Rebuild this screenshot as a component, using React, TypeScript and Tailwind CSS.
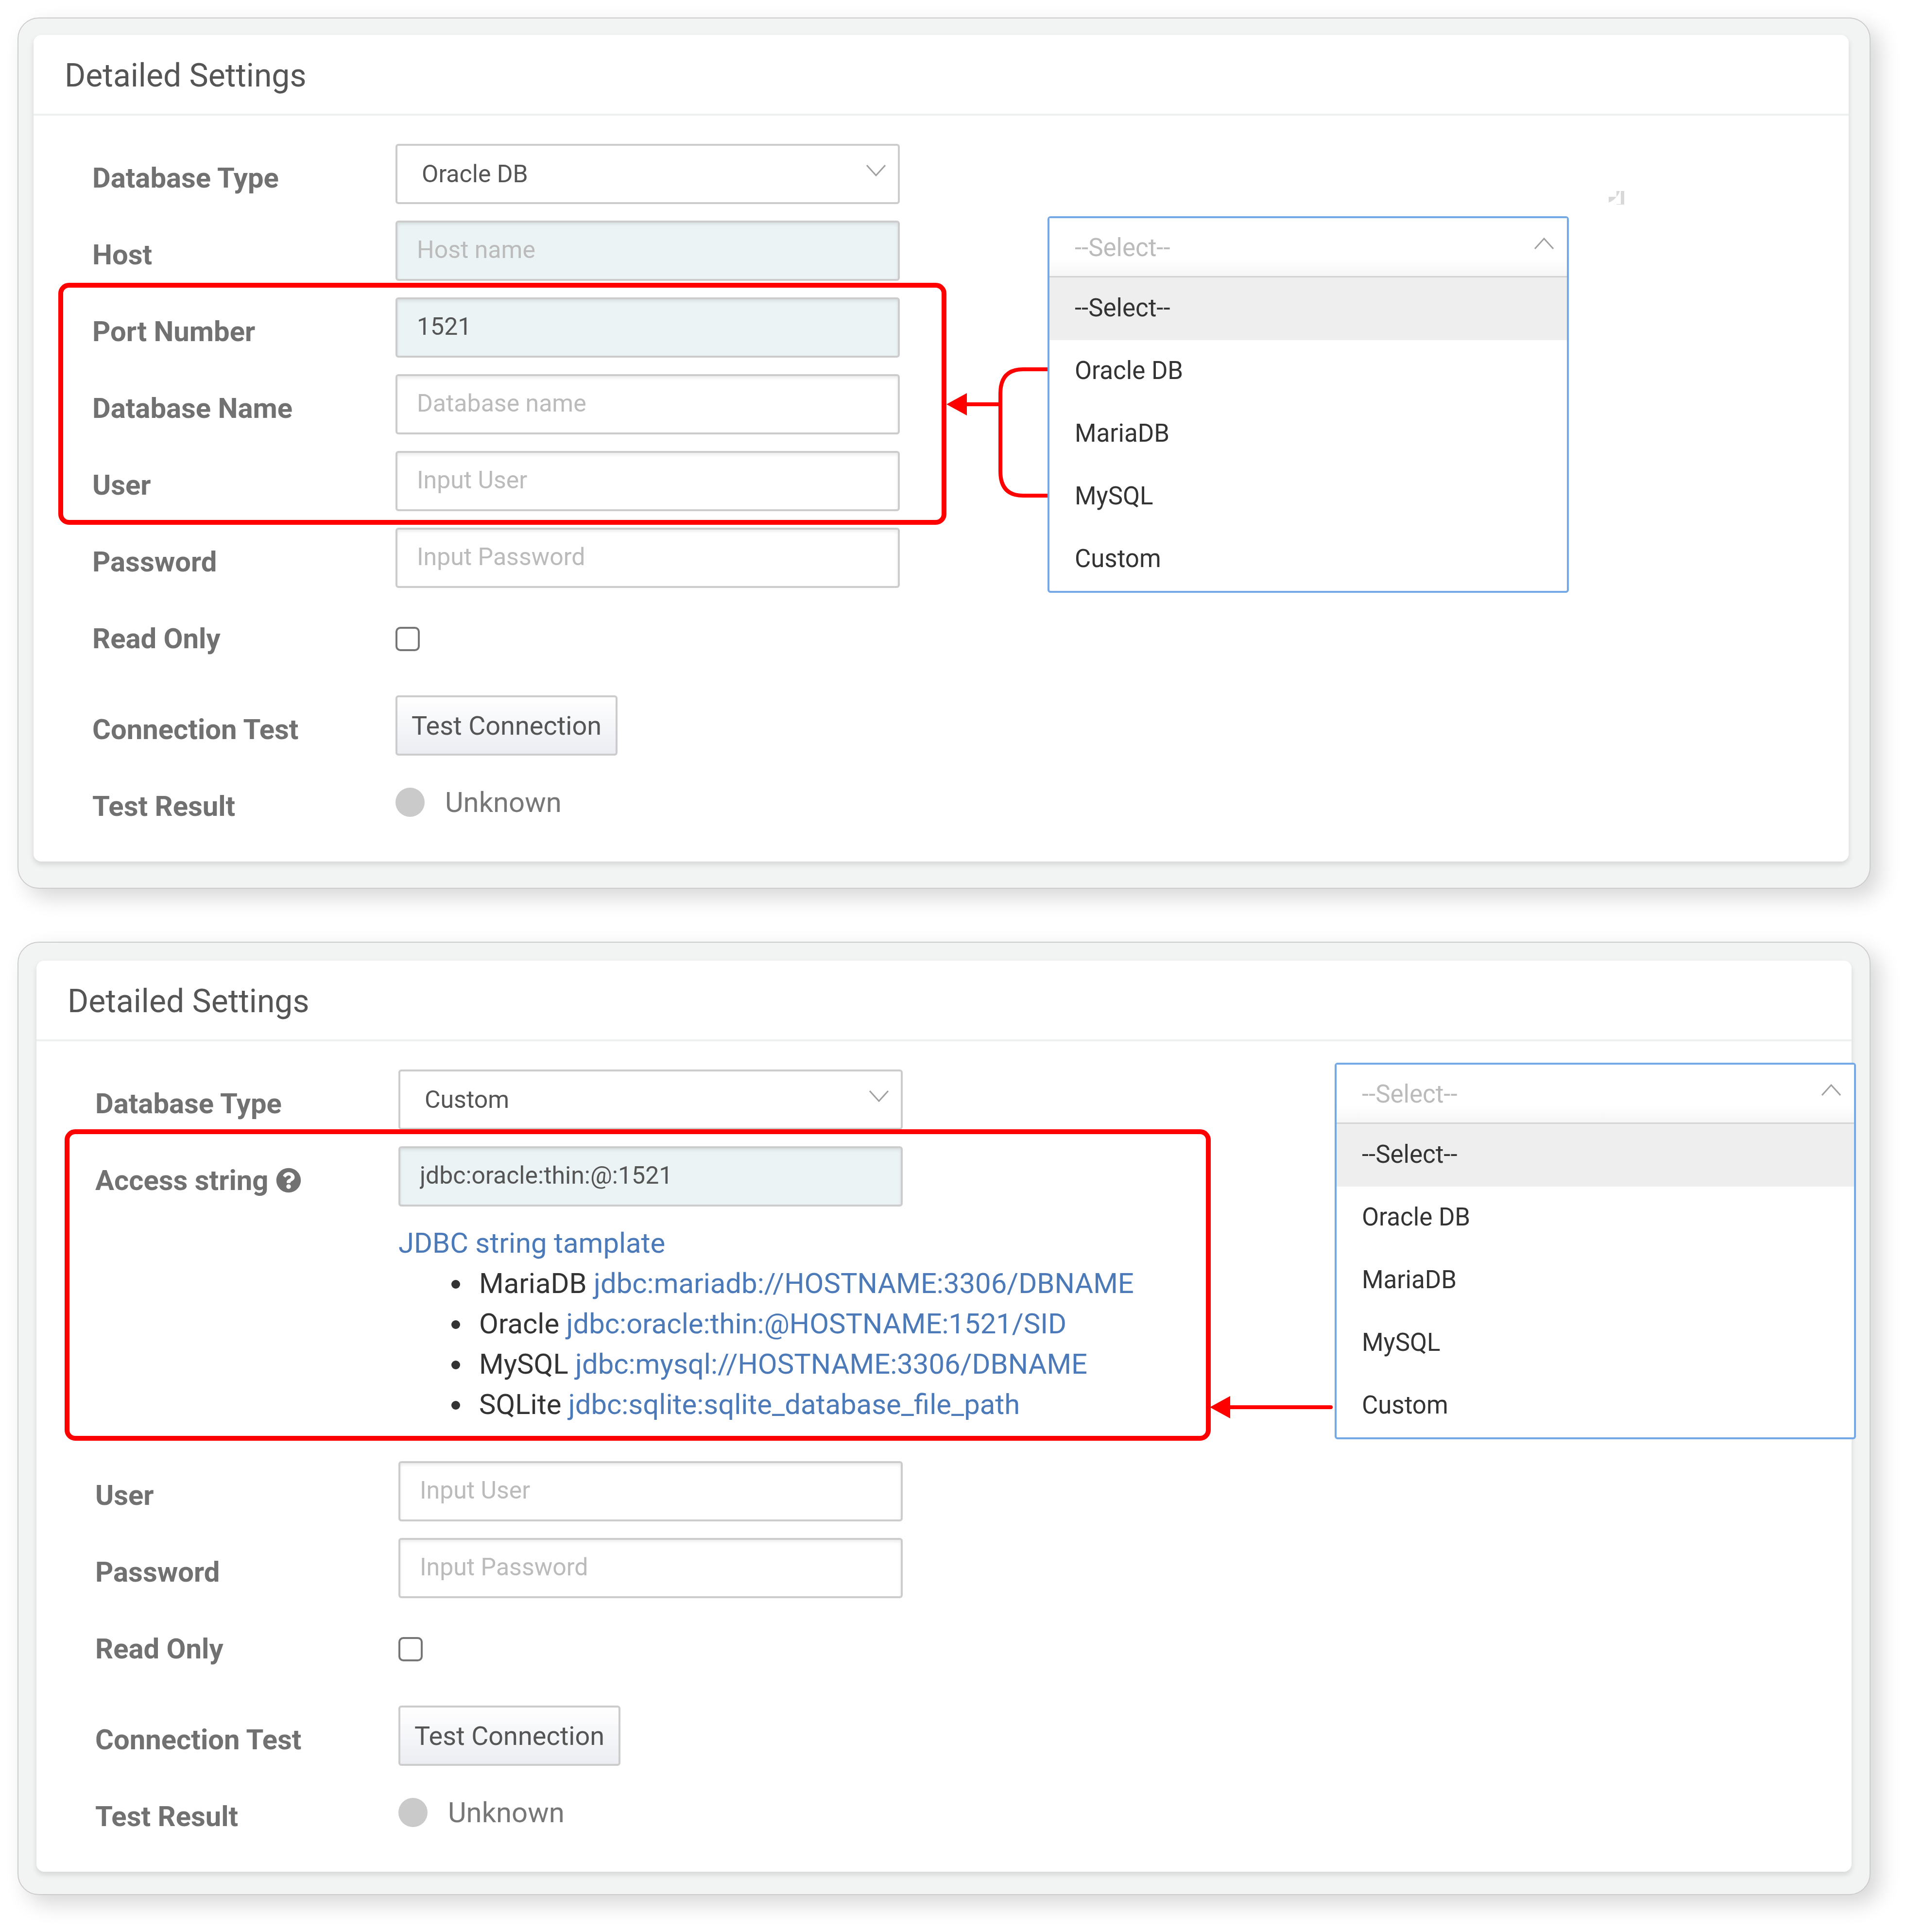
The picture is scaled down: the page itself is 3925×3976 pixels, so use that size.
import { useState } from "react"
import type { ReactNode } from "react"
import { FaQuestionCircle } from "react-icons/fa"

const dbTypes = ["--Select--", "Oracle DB", "MariaDB", "MySQL", "Custom"]

const templates = [
  { name: "MariaDB", url: "jdbc:mariadb://HOSTNAME:3306/DBNAME" },
  { name: "Oracle", url: "jdbc:oracle:thin:@HOSTNAME:1521/SID" },
  { name: "MySQL", url: "jdbc:mysql://HOSTNAME:3306/DBNAME" },
  { name: "SQLite", url: "jdbc:sqlite:sqlite_database_file_path" },
]

const fieldBase =
  "block h-[124px] w-full rounded-[6px] border-4 border-[#cccccc] px-10 pb-1 text-[50px] text-[#555555] shadow-[inset_0_4px_6px_rgba(0,0,0,0.08)] placeholder:text-[#bbbbbb]"

function Chevron({ up = false }: { up?: boolean }) {
  return (
    <svg
      viewBox="0 0 40 24"
      className="h-6 w-10"
      fill="none"
      stroke="#a0a0a0"
      strokeWidth="3"
      aria-hidden="true"
    >
      <path d={up ? "M1 23 20 2 39 23" : "M1 1 20 22 39 1"} />
    </svg>
  )
}

function Row({ label, htmlFor, children }: { label: ReactNode; htmlFor?: string; children: ReactNode }) {
  return (
    <div className="flex min-h-[158px] items-start">
      <label
        htmlFor={htmlFor}
        className="flex w-[624px] shrink-0 items-center gap-4 pt-2 text-[58px] leading-[124px] font-bold text-[#717171]"
      >
        {label}
      </label>
      <div className="w-[1038px]">{children}</div>
    </div>
  )
}

function TypeSelect({ id, initial }: { id: string; initial: string }) {
  const [value, setValue] = useState(initial)

  return (
    <Row label="Database Type" htmlFor={id}>
      <div className="relative">
        <select
          id={id}
          value={value}
          onChange={(e) => setValue(e.target.value)}
          className="block h-[124px] w-full appearance-none rounded-[6px] border-4 border-[#cccccc] bg-white px-[50px] text-[50px] text-[#555555]"
        >
          {dbTypes.map((type) => (
            <option key={type}>{type}</option>
          ))}
        </select>
        <span className="pointer-events-none absolute top-[43px] right-[29px]">
          <Chevron />
        </span>
      </div>
    </Row>
  )
}

function TextRow({
  id,
  label,
  placeholder,
  value,
  required = false,
  type = "text",
}: {
  id: string
  label: string
  placeholder?: string
  value?: string
  required?: boolean
  type?: string
}) {
  return (
    <Row label={label} htmlFor={id}>
      <input
        id={id}
        type={type}
        placeholder={placeholder}
        defaultValue={value}
        className={`${fieldBase} ${required ? "bg-[#ebf3f5]" : "bg-white"}`}
      />
    </Row>
  )
}

// Rows that close both forms
function TestRows({ prefix }: { prefix: string }) {
  return (
    <>
      <div className="flex h-[187px] items-start">
        <Row label="Read Only" htmlFor={`${prefix}-readonly`}>
          <input
            id={`${prefix}-readonly`}
            type="checkbox"
            className="mt-[46px] block size-[50px] appearance-none rounded-[10px] border-4 border-[#767676] bg-white checked:bg-[#767676]"
          />
        </Row>
      </div>
      <Row label="Connection Test" htmlFor={`${prefix}-test`}>
        <button
          id={`${prefix}-test`}
          type="button"
          className="h-[124px] rounded-[6px] border-4 border-[#cccccc] bg-linear-to-b from-white to-[#ebedf2] px-[29px] text-[54px] text-[#555555]"
        >
          Test Connection
        </button>
      </Row>
      <Row label="Test Result">
        <div className="flex h-[124px] items-center gap-[42px] text-[58px] text-[#777777]">
          <span className="size-[60px] rounded-full bg-[#cacaca]"></span>
          Unknown
        </div>
      </Row>
    </>
  )
}

function OpenDropdown({ className }: { className: string }) {
  const [selected, setSelected] = useState("--Select--")

  return (
    <div className={`absolute w-[1073px] rounded-[6px] border-4 border-[#75a9e6] bg-white text-[51px] ${className}`}>
      <button
        type="button"
        aria-haspopup="listbox"
        aria-expanded="true"
        className="flex h-[122px] w-full items-start justify-between border-b-3 border-[#d4d4d4] bg-linear-to-b from-white from-70% to-[#f6f6f6] pr-[27px] pl-[52px] text-[#bbbbbb]"
      >
        <span className="leading-[122px]">--Select--</span>
        <span className="pt-10">
          <Chevron up />
        </span>
      </button>
      <ul role="listbox" aria-label="Database types">
        {dbTypes.map((type) => (
          <li
            key={type}
            role="option"
            aria-selected={type === selected}
            onClick={() => setSelected(type)}
            className={`h-[129px] px-[52px] leading-[125px] text-[#333333] ${type === selected ? "bg-[#eeeeee]" : ""}`}
          >
            {type}
          </li>
        ))}
      </ul>
    </div>
  )
}

function Card({ children }: { children: ReactNode }) {
  return (
    <div className="relative rounded-[16px] bg-white pb-[26px] shadow-[0_6px_12px_rgba(0,0,0,0.12)]">
      <h2 className="h-[166px] border-b-4 border-[#eeefef] pl-16 text-[66px] leading-[168px] text-[#555555]">
        Detailed Settings
      </h2>
      <form className="pt-[58px] pl-[121px]">{children}</form>
    </div>
  )
}

const panel =
  "rounded-[44px] border-2 border-[#cccccc] bg-[#f2f4f3] shadow-[18px_18px_44px_rgba(0,0,0,0.16)]"

export default function App() {
  return (
    <main className="flex flex-col gap-[109px] overflow-hidden bg-white pt-9 pr-[75px] pb-19 pl-9 font-['Roboto',sans-serif]">
      <section className={`${panel} relative pt-[34px] pr-[43px] pb-[54px] pl-[31px]`}>
        <Card>
          <TypeSelect id="oracle-type" initial="Oracle DB" />
          <TextRow id="host" label="Host" placeholder="Host name" required />
          <TextRow id="port" label="Port Number" value="1521" required />
          <TextRow id="dbname" label="Database Name" placeholder="Database name" />
          <TextRow id="oracle-user" label="User" placeholder="Input User" />
          <TextRow id="oracle-password" label="Password" placeholder="Input Password" type="password" />
          <TestRows prefix="oracle" />
        </Card>

        {/* Callout round the fields shared by the driver types */}
        <div className="pointer-events-none absolute top-[544px] left-[82px] h-[498px] w-[1828px] rounded-[22px] border-10 border-[#ff0000]"></div>
        <svg
          viewBox="0 0 210 270"
          className="absolute top-[717px] left-[1910px] h-[270px] w-[210px]"
          fill="none"
          stroke="#ff0000"
          strokeWidth="8"
          aria-hidden="true"
        >
          <path d="M210 5H158Q111 5 111 55V215Q111 265 158 265H210M111 77H38" />
          <path d="M0 77 42 54V100Z" fill="#ff0000" stroke="none" />
        </svg>
        <OpenDropdown className="top-[407px] left-[2118px]" />
        <svg viewBox="0 0 32 28" className="absolute top-[355px] left-[3273px] h-7 w-8" fill="#d8d8d8" aria-hidden="true">
          <path d="M0 12H16Q10 20 0 24ZM16 0H23Q21 7 16 12ZM25 0H32V28H16V27H25Z" />
        </svg>
      </section>

      <section className={`${panel} relative pt-[37px] pr-[37px] pb-[46px] pl-[37px]`}>
        <Card>
          <TypeSelect id="custom-type" initial="Custom" />
          <div className="pb-[42px]">
            <Row
              label={
                <>
                  Access string
                  <FaQuestionCircle className="size-[52px]" aria-hidden="true" />
                </>
              }
              htmlFor="access"
            >
              <input id="access" type="text" defaultValue="jdbc:oracle:thin:@:1521" className={`${fieldBase} bg-[#ebf3f5]`} />
              <div className="pt-[34px] pb-[33px] text-[58px] leading-[83px] whitespace-nowrap text-[#333333]">
                <a href="#template" className="text-[#4c7ab8]">
                  JDBC string tamplate
                </a>
                <ul className="list-disc pl-[152px]">
                  {templates.map((template) => (
                    <li key={template.name} className="pl-[14px]">
                      {template.name}{" "}
                      <a href="#template" className="text-[#4c7ab8]">
                        {template.url}
                      </a>
                    </li>
                  ))}
                </ul>
              </div>
            </Row>
          </div>
          <TextRow id="custom-user" label="User" placeholder="Input User" />
          <TextRow id="custom-password" label="Password" placeholder="Input Password" type="password" />
          <TestRows prefix="custom" />
        </Card>

        <div className="pointer-events-none absolute top-[384px] left-[95px] h-[641px] w-[2359px] rounded-[22px] border-10 border-[#ff0000]"></div>
        <svg
          viewBox="0 0 256 46"
          className="absolute top-[933px] left-[2452px] h-[46px] w-[256px]"
          fill="none"
          stroke="#ff0000"
          strokeWidth="8"
          strokeLinecap="round"
          aria-hidden="true"
        >
          <path d="M38 23H249" />
          <path d="M0 23 42 0V46Z" fill="#ff0000" stroke="none" />
        </svg>
        <OpenDropdown className="top-[247px] left-[2709px]" />
      </section>
    </main>
  )
}
